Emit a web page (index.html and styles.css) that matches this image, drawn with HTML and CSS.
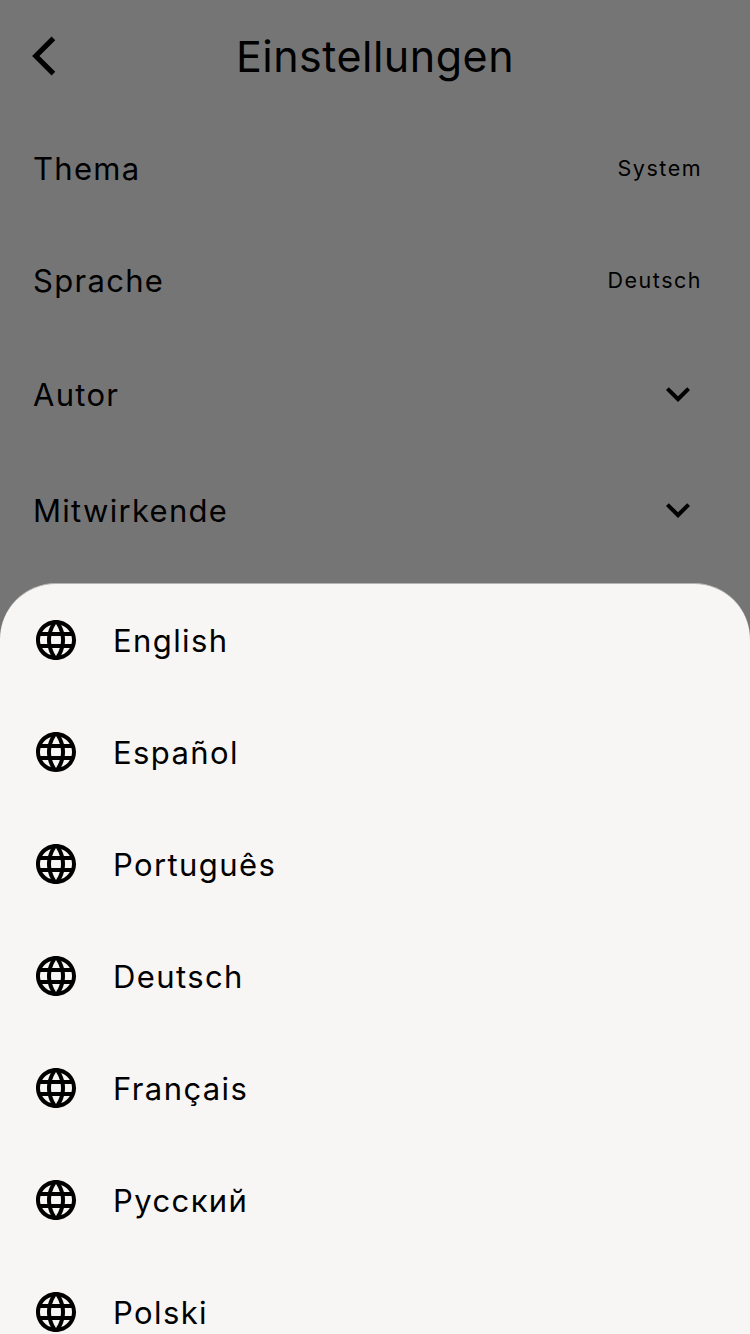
FILE: index.html
```html
<!DOCTYPE html>
<html lang="de">
<head>
<meta charset="utf-8">
<title>Einstellungen</title>
<link rel="stylesheet" href="styles.css">
</head>
<body>
<svg class="defs" aria-hidden="true">
  <symbol id="globe" viewBox="0 0 24 24"><path d="M11.99 2C6.47 2 2 6.48 2 12s4.47 10 9.99 10C17.52 22 22 17.52 22 12S17.52 2 11.99 2zm6.93 6h-2.95c-.32-1.25-.78-2.45-1.38-3.56 1.84.63 3.37 1.91 4.33 3.56zM12 4.04c.83 1.2 1.48 2.53 1.91 3.96h-3.82c.43-1.43 1.08-2.76 1.91-3.96zM4.26 14C4.1 13.36 4 12.69 4 12s.1-1.36.26-2h3.38c-.08.66-.14 1.32-.14 2s.06 1.34.14 2H4.26zm.82 2h2.95c.32 1.25.78 2.45 1.38 3.56-1.84-.63-3.37-1.9-4.33-3.56zm2.95-8H5.08c.96-1.66 2.49-2.93 4.33-3.56C8.81 5.55 8.35 6.75 8.03 8zM12 19.96c-.83-1.2-1.48-2.53-1.91-3.96h3.82c-.43 1.43-1.08 2.76-1.91 3.96zM14.34 14H9.66c-.09-.66-.16-1.32-.16-2s.07-1.35.16-2h4.68c.09.65.16 1.32.16 2s-.07 1.34-.16 2zm.25 5.56c.6-1.11 1.06-2.31 1.38-3.56h2.95c-.96 1.65-2.49 2.93-4.33 3.56zM16.36 14c.08-.66.14-1.32.14-2s-.06-1.34-.14-2h3.38c.16.64.26 1.31.26 2s-.1 1.36-.26 2h-3.38z"/></symbol>
  <symbol id="chevron" viewBox="0 0 24 24"><path d="M7.41 8.59 12 13.17l4.59-4.58L18 10l-6 6-6-6z"/></symbol>
</svg>
<main class="screen">
  <header class="header">
    <svg class="back" viewBox="0 0 24 40"><path d="M21.4 2.4 3.8 20l17.6 17.6"/></svg>
    <h1 class="title">Einstellungen</h1>
  </header>
  <section class="settings">
    <div class="row"><span>Thema</span><span class="value">System</span></div>
    <div class="row"><span>Sprache</span><span class="value">Deutsch</span></div>
    <div class="row row-expand"><span>Autor</span><svg class="chevron"><use href="#chevron"/></svg></div>
    <div class="row row-expand"><span>Mitwirkende</span><svg class="chevron"><use href="#chevron"/></svg></div>
  </section>
  <ul class="sheet">
    <li class="language"><svg class="globe"><use href="#globe"/></svg><span>English</span></li>
    <li class="language"><svg class="globe"><use href="#globe"/></svg><span>Español</span></li>
    <li class="language"><svg class="globe"><use href="#globe"/></svg><span>Português</span></li>
    <li class="language"><svg class="globe"><use href="#globe"/></svg><span>Deutsch</span></li>
    <li class="language"><svg class="globe"><use href="#globe"/></svg><span>Français</span></li>
    <li class="language"><svg class="globe"><use href="#globe"/></svg><span>Русский</span></li>
    <li class="language"><svg class="globe"><use href="#globe"/></svg><span>Polski</span></li>
  </ul>
</main>
</body>
</html>
```

FILE: styles.css
```css
* { box-sizing: border-box; }
body { margin: 0; color: #000; font-family: Inter, "Liberation Sans", sans-serif; }
.defs { position: absolute; width: 0; height: 0; }
.screen { height: 1334px; overflow: hidden; display: flex; flex-direction: column; background: #757575; }
.header { flex: none; height: 112px; display: grid; grid-template-columns: 112px 1fr 112px; align-items: center; }
.back { width: 24px; height: 40px; margin-left: 32px; fill: none; stroke: #000; stroke-width: 5.2; }
.title { margin: 0 0 1px; text-align: center; font-size: 43px; font-weight: 400; letter-spacing: 0.5px; }
.settings { flex: none; height: 471px; font-size: 31px; font-weight: 400; letter-spacing: 1.3px; }
.row { height: 112px; padding: 1px 48px 0 33px; display: flex; align-items: center; justify-content: space-between; }
.row-expand { height: 116px; }
.value { padding-bottom: 2px; font-size: 21.5px; font-weight: 400; letter-spacing: 1.5px; }
.chevron { width: 48px; height: 48px; margin-top: -1px; }
.sheet { flex: none; height: 751px; margin: 0; padding: 0; list-style: none; overflow: hidden; background: #f7f6f4; border-top: 1px solid #b5b4b3; border-radius: 56px 56px 0 0; }
.language { height: 112px; display: flex; align-items: center; padding-left: 32px; gap: 33px; font-size: 31px; font-weight: 400; letter-spacing: 1.4px; }
.language span { padding-top: 1px; }
.globe { width: 48px; height: 48px; }
```
